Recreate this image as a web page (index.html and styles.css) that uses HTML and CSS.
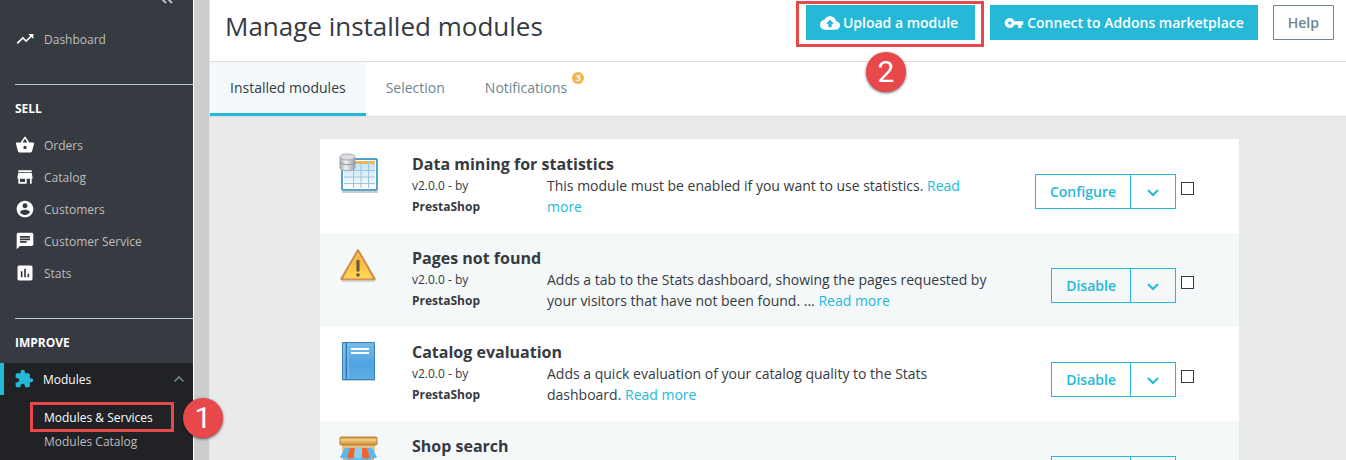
FILE: index.html
```html
<!DOCTYPE html>
<html lang="en">
<head>
    <meta charset="UTF-8">
    <meta name="viewport" content="width=device-width, initial-scale=1.0">
    <title>Manage installed modules</title>
    <link rel="stylesheet" href="styles.css">
</head>
<body>
    <nav class="sidebar">
        <button class="collapse" type="button" aria-label="Collapse menu">
            <svg width="12" height="4" viewBox="0 0 12 4"><path d="M1-1l4 4M7-1l4 4" fill="none" stroke="#bebebe" stroke-width="2"/></svg>
        </button>
        <ul class="menu">
            <li><a href="#"><svg class="icon" viewBox="0 0 24 24"><path d="M16 6l2.29 2.29-4.88 4.88-4-4L2 16.59 3.41 18l6-6 4 4 6.3-6.29L22 12V6z"/></svg>Dashboard</a></li>
        </ul>

        <h2>SELL</h2>
        <ul class="menu">
            <li><a href="#"><svg class="icon" viewBox="0 0 24 24"><path d="M17.21 9l-4.38-6.56c-.19-.28-.51-.42-.83-.42-.32 0-.64.14-.83.43L6.79 9H2c-.55 0-1 .45-1 1 0 .09.01.18.04.27l2.54 9.27c.23.84 1 1.46 1.92 1.46h13c.92 0 1.69-.62 1.93-1.46l2.54-9.27L23 10c0-.55-.45-1-1-1h-4.79zM9 9l3-4.4L15 9H9zm3 8c-1.1 0-2-.9-2-2s.9-2 2-2 2 .9 2 2-.9 2-2 2z"/></svg>Orders</a></li>
            <li><a href="#"><svg class="icon" viewBox="0 0 24 24"><path d="M20 4H4v2h16V4zm1 10v-2l-1-5H4l-1 5v2h1v6h10v-6h4v6h2v-6h1zm-9 4H6v-4h6v4z"/></svg>Catalog</a></li>
            <li><a href="#"><svg class="icon" viewBox="0 0 24 24"><path d="M12 2C6.48 2 2 6.48 2 12s4.48 10 10 10 10-4.480 10-10S17.520 2 12 2zm0 3c1.660 0 3 1.340 3 3s-1.340 3-3 3-3-1.340-3-3 1.340-3 3-3zm0 14.200c-2.500 0-4.710-1.280-6-3.220.030-1.990 4-3.080 6-3.080 1.990 0 5.970 1.090 6 3.080-1.290 1.940-3.500 3.220-6 3.220z"/></svg>Customers</a></li>
            <li><a href="#"><svg class="icon" viewBox="0 0 24 24"><path d="M20 2H4c-1.100 0-1.990.900-1.990 2L2 22l4-4h14c1.100 0 2-.900 2-2V4c0-1.100-.900-2-2-2zM6 9h12v2H6V9zm8 5H6v-2h8v2zm4-6H6V6h12v2z"/></svg>Customer Service</a></li>
            <li><a href="#"><svg class="icon" viewBox="0 0 24 24"><path d="M19 3H5c-1.100 0-2 .900-2 2v14c0 1.100.900 2 2 2h14c1.100 0 2-.900 2-2V5c0-1.100-.900-2-2-2zM9 17H7v-7h2v7zm4 0h-2V7h2v10zm4 0h-2v-4h2v4z"/></svg>Stats</a></li>
        </ul>

        <h2>IMPROVE</h2>
        <ul class="menu">
            <li class="active">
                <a href="#">
                    <svg class="icon" viewBox="0 0 24 24"><path d="M20.500 11H19V7c0-1.100-.900-2-2-2h-4V3.500C13 2.120 11.880 1 10.500 1S8 2.120 8 3.500V5H4c-1.100 0-1.990.900-1.990 2v3.800H3.500c1.490 0 2.700 1.210 2.700 2.700s-1.210 2.700-2.700 2.700H2V20c0 1.100.900 2 2 2h3.800v-1.500c0-1.490 1.210-2.700 2.700-2.700 1.490 0 2.700 1.210 2.700 2.700V22H17c1.100 0 2-.900 2-2v-4h1.500c1.380 0 2.500-1.120 2.500-2.500S21.880 11 20.500 11z"/></svg>Modules
                    <svg class="arrow" width="12" height="8" viewBox="0 0 12 8"><path d="M1.500 6.500L6 2l4.500 4.500" fill="none" stroke="#6c868e" stroke-width="1.600"/></svg>
                </a>
                <ul class="submenu">
                    <li><a class="current marked" href="#">Modules &amp; Services<span class="step">1</span></a></li>
                    <li><a href="#">Modules Catalog</a></li>
                </ul>
            </li>
        </ul>
    </nav>
    <div class="gutter"></div>

    <main>
        <header class="toolbar">
            <h1>Manage installed modules</h1>
            <button class="btn btn-primary marked" type="button">
                <svg class="icon" viewBox="0 0 24 24"><path d="M19.350 10.040C18.670 6.590 15.640 4 12 4 9.110 4 6.600 5.640 5.350 8.040 2.340 8.360 0 10.910 0 14c0 3.310 2.690 6 6 6h13c2.760 0 5-2.240 5-5 0-2.640-2.050-4.780-4.650-4.960zM14 13v4h-4v-4H7l5-5 5 5h-3z"/></svg>Upload a module<span class="step">2</span>
            </button>
            <button class="btn btn-primary" type="button">
                <svg class="icon" viewBox="0 0 24 24"><path d="M12.650 10C11.830 7.670 9.610 6 7 6c-3.310 0-6 2.690-6 6s2.690 6 6 6c2.610 0 4.830-1.670 5.650-4H17v4h4v-4h2v-4H12.650zM7 14c-1.100 0-2-.900-2-2s.900-2 2-2 2 .900 2 2-.900 2-2 2z"/></svg>Connect to Addons marketplace
            </button>
            <button class="btn btn-help" type="button">Help</button>
        </header>

        <div class="tabs">
            <a class="active" href="#">Installed modules</a>
            <a href="#">Selection</a>
            <a href="#">Notifications<span class="count">3</span></a>
        </div>

        <div class="modules">
            <div class="module">
                <svg class="logo" viewBox="0 0 40 40">
                    <defs>
                        <linearGradient id="sheet" x2="0" y2="1"><stop stop-color="#b9e0f5"/><stop offset="1" stop-color="#fff"/></linearGradient>
                        <linearGradient id="disk"><stop stop-color="#a9adb5"/><stop offset=".4" stop-color="#f1f2f4"/><stop offset="1" stop-color="#989da6"/></linearGradient>
                    </defs>
                    <path d="M3 39h36" stroke="#c9ced2" stroke-width="2"/>
                    <rect x="3" y="6" width="35" height="31" rx="1" fill="url(#sheet)" stroke="#2487bd" stroke-width="1.500"/>
                    <path d="M5 8h31v3H5z" fill="#f6b64c"/>
                    <path d="M5 17.500h31M5 24h31M5 30.500h31M14.500 8v27M22 8v27M29.500 8v27" stroke="#9fc3dc"/>
                    <path d="M4.500 7.500h32v28h-32z" fill="none" stroke="#fff"/>
                    <path d="M1 4v11c0 3.500 15 3.500 15 0V4z" fill="url(#disk)" stroke="#a3a8b0"/>
                    <path d="M1 9c0 3.500 15 3.500 15 0" fill="none" stroke="#8e939b"/>
                    <ellipse cx="8.500" cy="4" rx="7.500" ry="3" fill="#dcdee2" stroke="#a3a8b0"/>
                </svg>
                <div class="info">
                    <h3>Data mining for statistics</h3>
                    <p class="meta">v2.0.0 - by <b>PrestaShop</b></p>
                    <p class="text">This module must be enabled if you want to use statistics. <a href="#">Read more</a></p>
                </div>
                <div class="actions">
                    <button class="btn btn-action" type="button">Configure</button>
                    <button class="btn btn-toggle" type="button" aria-label="More actions"><svg width="12" height="8" viewBox="0 0 12 8"><path d="M1 1l5 5 5-5"/></svg></button>
                    <input type="checkbox" aria-label="Select Data mining for statistics">
                </div>
            </div>

            <div class="module">
                <svg class="logo" viewBox="0 0 40 40">
                    <defs><linearGradient id="warn" x2="0" y2="1"><stop stop-color="#f9a51b"/><stop offset="1" stop-color="#ffdc58"/></linearGradient></defs>
                    <path d="M3 34h33" stroke="#d5d5d2" stroke-width="2"/>
                    <path d="M19 3.500L35.500 32H2.500z" fill="url(#warn)" stroke="#d2924a" stroke-width="2.500" stroke-linejoin="round"/>
                    <path d="M19 6.500L33 31H5z" fill="none" stroke="#ffd476"/>
                    <path d="M19 13v11.500" stroke="#5b5850" stroke-width="3"/>
                    <circle cx="19" cy="28" r="1.800" fill="#5b5850"/>
                </svg>
                <div class="info">
                    <h3>Pages not found</h3>
                    <p class="meta">v2.0.0 - by <b>PrestaShop</b></p>
                    <p class="text">Adds a tab to the Stats dashboard, showing the pages requested by your visitors that have not been found. ... <a href="#">Read more</a></p>
                </div>
                <div class="actions">
                    <button class="btn btn-action" type="button">Disable</button>
                    <button class="btn btn-toggle" type="button" aria-label="More actions"><svg width="12" height="8" viewBox="0 0 12 8"><path d="M1 1l5 5 5-5"/></svg></button>
                    <input type="checkbox" aria-label="Select Pages not found">
                </div>
            </div>

            <div class="module">
                <svg class="logo" viewBox="0 0 40 40">
                    <defs><linearGradient id="book" x2="0" y2="1"><stop stop-color="#76bbe8"/><stop offset=".6" stop-color="#4fa3e0"/><stop offset="1" stop-color="#5fafe8"/></linearGradient></defs>
                    <path d="M3 39.500h33" stroke="#c9ced2" stroke-width="2"/>
                    <path d="M3.500 1.500h32v37h-32z" fill="url(#book)" stroke="#3c7fb6"/>
                    <path d="M7.500 2v36" stroke="#2f75ae" stroke-width="1.500"/>
                    <path d="M5 2.500v35M9 2.500v35" stroke="#8ec8f0"/>
                    <path d="M12 8h18M12 12h18" stroke="#fff" stroke-width="2"/>
                </svg>
                <div class="info">
                    <h3>Catalog evaluation</h3>
                    <p class="meta">v2.0.0 - by <b>PrestaShop</b></p>
                    <p class="text">Adds a quick evaluation of your catalog quality to the Stats dashboard. <a href="#">Read more</a></p>
                </div>
                <div class="actions">
                    <button class="btn btn-action" type="button">Disable</button>
                    <button class="btn btn-toggle" type="button" aria-label="More actions"><svg width="12" height="8" viewBox="0 0 12 8"><path d="M1 1l5 5 5-5"/></svg></button>
                    <input type="checkbox" aria-label="Select Catalog evaluation">
                </div>
            </div>

            <div class="module">
                <svg class="logo" viewBox="0 0 40 40">
                    <defs><linearGradient id="wood" x2="0" y2="1"><stop stop-color="#c98a2c"/><stop offset=".35" stop-color="#f2ce8a"/><stop offset="1" stop-color="#c98a2c"/></linearGradient></defs>
                    <path d="M4 18h31v21H4z" fill="#e4b365"/>
                    <path d="M7 22h25v15H7z" fill="#6fb5dc"/>
                    <path d="M3 9h33v8H3z" fill="#e0c18c"/>
                    <path d="M6 13h6L8 22q-4 3-7 0z" fill="#5ab8ec"/>
                    <path d="M11 13h5l-1 9q-4 3-7 0z" fill="#f2652a"/>
                    <path d="M16 13h7v9q-4 3-8 0z" fill="#8bd0f5"/>
                    <path d="M23 13h5l3 9q-4 3-8 0z" fill="#f2652a"/>
                    <path d="M28 13h5l5 9q-4 3-7 0z" fill="#5ab8ec"/>
                    <rect x="1" y="2" width="37" height="8" rx="1" fill="url(#wood)" stroke="#bd8430"/>
                </svg>
                <div class="info">
                    <h3>Shop search</h3>
                </div>
                <div class="actions">
                    <button class="btn btn-action" type="button">Disable</button>
                    <button class="btn btn-toggle" type="button" aria-label="More actions"><svg width="12" height="8" viewBox="0 0 12 8"><path d="M1 1l5 5 5-5"/></svg></button>
                    <input type="checkbox" aria-label="Select Shop search">
                </div>
            </div>
        </div>
    </main>
</body>
</html>
```
FILE: styles.css
```css
* {
    box-sizing: border-box;
}

body {
    display: flex;
    height: 100vh;
    margin: 0;
    overflow: hidden;
    font-family: 'Open Sans', 'Noto Sans', sans-serif;
    font-size: 14px;
    color: #363a41;
    background: #e9eaec;
}

h1, h2, h3, p, ul {
    margin: 0;
    padding: 0;
}

ul {
    list-style: none;
}

a {
    color: #25b9d7;
    text-decoration: none;
}

button {
    font-family: inherit;
    cursor: pointer;
}

.icon {
    width: 20px;
    height: 20px;
    fill: currentColor;
    flex: none;
}

/* Sidebar */
.sidebar {
    flex: none;
    width: 193px;
    background: #363a41;
}

.collapse {
    display: flex;
    align-items: flex-start;
    justify-content: flex-end;
    width: 100%;
    height: 23px;
    padding: 0 20px;
    border: none;
    background: none;
}

.menu a {
    display: flex;
    align-items: center;
    gap: 9px;
    height: 32px;
    padding-left: 15px;
    font-size: 12px;
    color: #bebebe;
}

.menu .icon {
    color: #fff;
}

.sidebar h2 {
    margin: 29px 0 10px 15px;
    padding-top: 13px;
    border-top: 1px solid #bbcdd2;
    font-size: 12px;
    line-height: 21px;
    font-weight: 700;
    color: #fff;
}

.menu .active {
    background: #202226;
}

.menu .active > a {
    padding-left: 10px;
    padding-right: 8px;
    border-left: 4px solid #25b9d7;
    color: #fff;
}

.menu .active > a .icon {
    color: #25b9d7;
}

.arrow {
    margin-left: auto;
}

.menu .submenu {
    padding: 11px 0 6px 44px;
}

.menu .submenu a {
    display: inline-block;
    height: 24px;
    padding: 0;
    line-height: 24px;
    vertical-align: top;
}

.menu .submenu .current {
    color: #fff;
}

.gutter {
    flex: none;
    width: 17px;
    background: #cdcdcd;
    border-left: 1px solid #fff;
    border-right: 1px solid #e4e4e4;
}

/* Numbered highlights */
.marked {
    position: relative;
    z-index: 2;
}

.marked::after {
    content: "";
    position: absolute;
    border: 3px solid #e84849;
    inset: -5px -10px -8px -11px;
}

.submenu .marked::after {
    inset: -4px -21px -2px -14px;
}

.step {
    position: absolute;
    top: 46px;
    left: 59px;
    width: 40px;
    height: 40px;
    border-radius: 50%;
    background: #e84849;
    box-shadow: 0 1px 3px rgba(0,0,0,0.6);
    color: #fff;
    font-family: Roboto, 'Liberation Sans', sans-serif;
    font-size: 30px;
    font-weight: 400;
    line-height: 40px;
    text-align: center;
}

.submenu .step {
    top: -8px;
    left: 139px;
}

/* Header */
main {
    flex: 1;
    min-width: 0;
}

.toolbar {
    display: flex;
    align-items: flex-start;
    gap: 15px;
    padding: 5px 12px 21px 15px;
    border-bottom: 1px solid #dfdfdf;
    background: #fff;
}

.toolbar h1 {
    flex: 1;
    font-size: 26px;
    line-height: 35px;
    margin-top: 4px;
    margin-bottom: -4px;
    font-weight: 400;
}

.btn {
    display: flex;
    align-items: center;
    justify-content: center;
    height: 35px;
    padding: 0 13px;
    border: 1px solid #25b9d7;
    font-size: 14px;
    font-weight: 600;
    white-space: nowrap;
}

.btn-primary {
    gap: 3px;
    background: #25b9d7;
    color: #fff;
}

.btn-help {
    background: #fff;
    border-color: #6c868e;
    border-radius: 1px;
    padding: 0 14px;
    color: #6c868e;
}

.tabs {
    display: flex;
    border-bottom: 1px solid #dfdfdf;
    background: #fff;
}

.tabs a {
    position: relative;
    padding: 0 20px;
    border-bottom: 3px solid transparent;
    line-height: 51px;
    color: #6c868e;
}

.tabs .active {
    border-color: #25b9d7;
    background: #f4f9fc;
    color: #363a41;
}

.count {
    position: absolute;
    top: 10px;
    right: 3px;
    width: 12px;
    height: 12px;
    border-radius: 50%;
    background: #f3b64b;
    color: #fff;
    font-size: 9px;
    font-weight: 700;
    line-height: 12px;
    text-align: center;
}

/* Module list */
.modules {
    margin: 22px 107px 0 110px;
}

.module {
    display: flex;
    align-items: flex-start;
    padding: 14px 45px 16px 19px;
    min-height: 94px;
    background: #fff;
}

.module:nth-child(even) {
    background: #f4f8f9;
}

.logo {
    flex: none;
    width: 40px;
    height: 40px;
    margin-right: 33px;
}

.info {
    display: grid;
    grid-template-columns: 135px minmax(0, 445px);
    flex: 1;
}

.info h3 {
    grid-column: 1 / -1;
    font-size: 16px;
    line-height: 22px;
    font-weight: 700;
}

.meta {
    font-size: 12px;
    line-height: 21px;
}

.meta b {
    display: block;
}

.text {
    line-height: 21px;
}

.actions {
    display: flex;
    margin-top: 21px;
}

.btn-action,
.btn-toggle {
    background: transparent;
    color: #25b9d7;
}

.btn-action {
    padding: 0 14px;
}

.btn-toggle {
    width: 46px;
    margin-left: -1px;
    padding: 3px 0 0;
}

.btn-toggle path {
    fill: none;
    stroke: #25b9d7;
    stroke-width: 2;
}

.actions input {
    appearance: none;
    width: 13px;
    height: 13px;
    margin: 8px 0 0 5px;
    border: 1px solid #363a41;
    background: #fff;
}
```
